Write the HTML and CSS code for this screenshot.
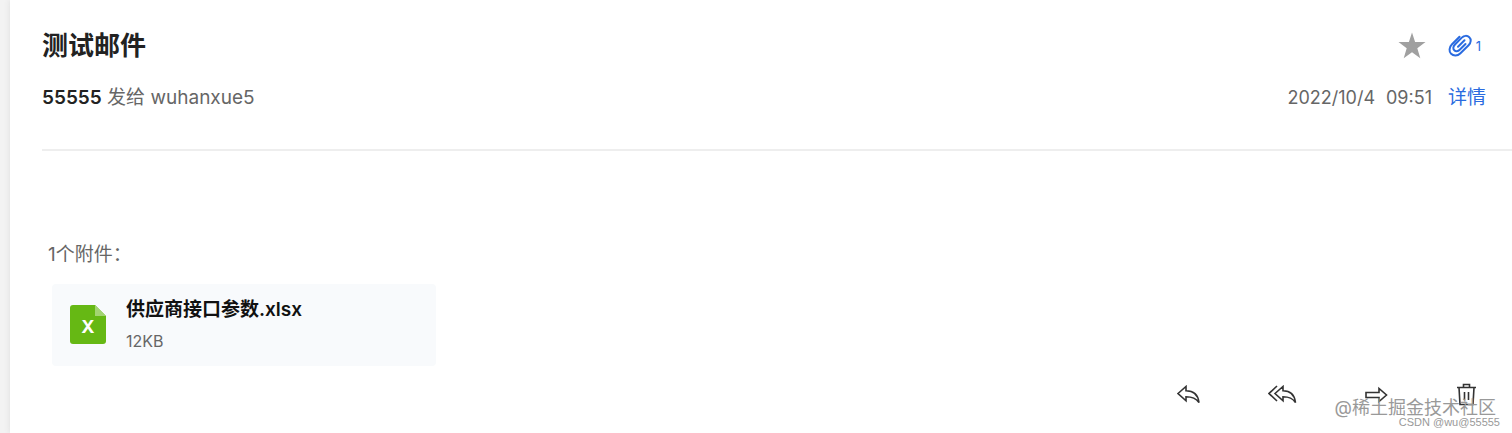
FILE: index.html
```html
<!DOCTYPE html>
<html lang="zh-CN">
<head>
    <meta charset="UTF-8">
    <meta name="viewport" content="width=device-width, initial-scale=1.0">
    <title>测试邮件</title>
    <link rel="stylesheet" href="styles.css">
</head>
<body>
    <main class="mail">
        <header class="mail-header">
            <div class="row">
                <h1 class="subject">测试邮件</h1>
                <div class="marks">
                    <button class="icon-btn" type="button" aria-label="星标">
                        <svg width="28" height="28" viewBox="0 0 28 28"><path fill="#a0a0a0" d="M14 .5l3.100 9.600H27.500l-8.200 6.200 3 10L14 20.300l-8.300 6 3-10L.5 10.100h10.400z"/></svg>
                    </button>
                    <a class="clip" href="#attachments" aria-label="1个附件">
                        <svg width="24" height="24" viewBox="0 0 24 24" fill="none" stroke="#2a6be0" stroke-width="2" stroke-linecap="round" stroke-linejoin="round"><path d="M11.500 2.800L4 10.300C1 13.300 .8 17.500 3.100 19.800C5.400 22.200 9.500 22.200 12.200 19.500L20.600 11.200C23.200 8.600 23.300 5.200 21.300 3.300C19.300 1.300 16 1.400 13.800 3.600L7 10.500C5 12.500 4.800 14.800 6.300 16.300C7.700 17.700 10 17.500 11.700 15.800L17.500 10M16.500 6.300L10 12.800"/></svg>
                        <span class="clip-count">1</span>
                    </a>
                </div>
            </div>
            <div class="row meta">
                <p class="people"><b>55555</b> 发给 wuhanxue5</p>
                <p class="date"><span>2022/10/4</span><span>09:51</span><a class="detail" href="#detail">详情</a></p>
            </div>
        </header>

        <section class="attachments" id="attachments">
            <h2 class="attach-title">1个附件：</h2>
            <div class="file">
                <svg class="file-icon" width="36" height="40" viewBox="0 0 36 40">
                    <path fill="#66b814" d="M3 0h22l11 11v25a3 3 0 0 1-3 3H3a3 3 0 0 1-3-3V3a3 3 0 0 1 3-3z"/>
                    <path fill="#a3d472" d="M25 0l11 11H25z"/>
                    <text class="file-type" x="18" y="28" text-anchor="middle">X</text>
                </svg>
                <div>
                    <p class="file-name">供应商接口参数.xlsx</p>
                    <p class="file-size">12KB</p>
                </div>
            </div>
        </section>

        <footer class="actions">
            <button class="icon-btn" type="button" aria-label="回复">
                <svg width="24" height="20" viewBox="0 0 24 20"><path d="M1 8.500L9 1.500V5.800C16.500 5.800 21 9.500 22 17.500C19 13.200 15.500 11.800 9 11.800V15.800z"/></svg>
            </button>
            <button class="icon-btn" type="button" aria-label="回复全部">
                <svg width="30" height="20" viewBox="0 0 30 20"><path d="M9 1L1 8.500L9 16M7 8.500L15 1.500V5.800C22 5.800 26.500 9.500 27.500 17.500C24.500 13.200 21.500 11.800 15 11.800V15.800z"/></svg>
            </button>
            <button class="icon-btn" type="button" aria-label="转发">
                <svg width="24" height="20" viewBox="0 0 24 20"><path d="M1 7.500H14V3.500L21.500 10L14 16.500V12.500H1z"/></svg>
            </button>
            <button class="icon-btn" type="button" aria-label="删除">
                <svg width="22" height="24" viewBox="0 0 22 24"><path d="M1 4.500H20M7.500 4.500V1.500H13.500V4.500M3 4.500L4 21.500H17L18 4.500M8.500 9V17M12.500 9V17"/></svg>
            </button>
        </footer>
    </main>

    <div class="watermark">
        <span class="watermark-main">@稀土掘金技术社区</span>
        <span class="watermark-sub">CSDN @wu@55555</span>
    </div>
</body>
</html>
```
FILE: styles.css
```css
* {
    box-sizing: border-box;
}
body {
    margin: 0;
    padding-left: 10px;
    background: #f3f3f3;
    font-family: Inter, "Noto Sans CJK SC", sans-serif;
    font-size: 18px;
    color: #666;
}
h1, h2, p {
    margin: 0;
}
a {
    color: #2a6be0;
    text-decoration: none;
}
svg {
    display: block;
}
.mail {
    min-height: 100vh;
    padding-left: 32px;
    background: #fff;
    box-shadow: 0 0 6px #ddd;
}
.mail-header {
    padding: 26px 0 35px;
    border-bottom: 2px solid #eee;
}
.row {
    display: flex;
    align-items: center;
    justify-content: space-between;
    padding-right: 26px;
}
.subject {
    font-size: 26px;
    line-height: 40px;
    color: #222;
}
.marks {
    display: flex;
    align-items: center;
    gap: 22px;
    padding-right: 5px;
}
.icon-btn {
    padding: 0;
    border: none;
    background: none;
    cursor: pointer;
}
.clip {
    display: flex;
    align-items: center;
    gap: 4px;
}
.clip-count {
    font-size: 13px;
}
.meta {
    margin-top: 16px;
    line-height: 32px;
}
.people {
    font-size: 19px;
}
.people b {
    font-weight: 600;
    color: #222;
}
.date {
    display: flex;
    gap: 11px;
}
.detail {
    margin-left: 5px;
    font-size: 19px;
}
.attachments {
    padding: 88px 6px 0;
}
.attach-title {
    font-size: 19px;
    font-weight: 400;
    line-height: 32px;
}
.file {
    display: flex;
    align-items: center;
    gap: 20px;
    width: 384px;
    max-width: 100%;
    margin: 13px 4px 0;
    padding: 10px 18px;
    border-radius: 4px;
    background: #f8fafc;
}
.file-type {
    fill: #fff;
    font-size: 18px;
    font-weight: 700;
}
.file-name {
    font-size: 19px;
    font-weight: 600;
    line-height: 32px;
    color: #111;
}
.file-size {
    font-size: 16px;
    line-height: 30px;
}
.actions {
    display: flex;
    align-items: center;
    justify-content: flex-end;
    gap: 67px;
    padding: 17px 34px 24px 0;
}
.actions svg {
    fill: none;
    stroke: #333;
    stroke-width: 1.6;
}
.watermark {
    position: absolute;
    right: 12px;
    bottom: 7px;
    display: flex;
    flex-direction: column;
    align-items: flex-end;
    color: #999;
    pointer-events: none;
}
.watermark-main {
    padding-right: 4px;
    font-size: 18px;
    line-height: 20px;
}
.watermark-sub {
    font-family: "Liberation Sans", sans-serif;
    font-size: 11px;
    line-height: 8px;
}
```
